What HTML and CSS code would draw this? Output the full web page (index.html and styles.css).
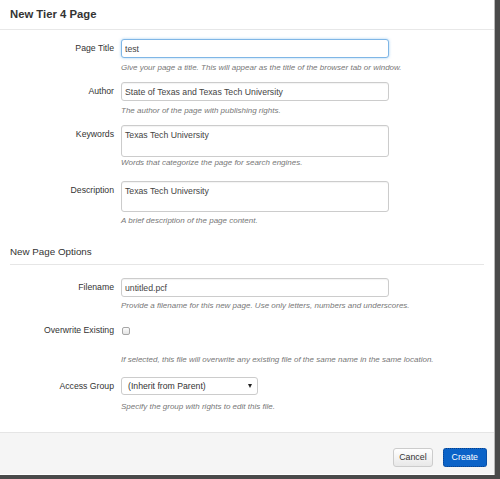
FILE: index.html
```html
<!DOCTYPE html>
<html>
<head>
<meta charset="utf-8">
<link rel="stylesheet" href="styles.css">
</head>
<body>
<div class="modal">
  <div class="header"><h1 class="title">New Tier 4 Page</h1></div>
  <div class="body">
    <div class="group g1">
      <label class="label">Page Title</label>
      <input class="field focus" type="text" value="test">
      <div class="help h5">Give your page a title. This will appear as the title of the browser tab or window.</div>
    </div>
    <div class="group g1">
      <label class="label">Author</label>
      <input class="field" type="text" value="State of Texas and Texas Tech University">
      <div class="help h5">The author of the page with publishing rights.</div>
    </div>
    <div class="group g3">
      <label class="label">Keywords</label>
      <textarea class="field area a32">Texas Tech University</textarea>
      <div class="help h1">Words that categorize the page for search engines.</div>
    </div>
    <div class="group">
      <label class="label">Description</label>
      <textarea class="field area a31">Texas Tech University</textarea>
      <div class="help h4">A brief description of the page content.</div>
    </div>
    <h2 class="section">New Page Options</h2>
    <div class="group g2">
      <label class="label">Filename</label>
      <input class="field" type="text" value="untitled.pcf">
      <div class="help h4">Provide a filename for this new page. Use only letters, numbers and underscores.</div>
    </div>
    <div class="group g4">
      <label class="label">Overwrite Existing</label>
      <div class="checkwrap"><span class="check"></span></div>
      <div class="help h15">If selected, this file will overwrite any existing file of the same name in the same location.</div>
    </div>
    <div class="group">
      <label class="label">Access Group</label>
      <div class="select"><span>(Inherit from Parent)</span><span class="arrow"></span></div>
      <div class="help h6">Specify the group with rights to edit this file.</div>
    </div>
  </div>
  <div class="footer">
    <button class="btn cancel">Cancel</button>
    <button class="btn create">Create</button>
  </div>
</div>
</body>
</html>
```

FILE: styles.css
```css
* { box-sizing: border-box; }
html, body { margin: 0; padding: 0; }
body {
  background: #4a4a4a;
  width: 500px;
  height: 479px;
  overflow: hidden;
  font-family: "Liberation Sans", Arial, sans-serif;
  color: #333;
}
.modal {
  width: 495px;
  height: 475px;
  background: #fff;
  border-right: 1px solid #b8b8b8;
  display: flex;
  flex-direction: column;
}
.header {
  height: 30px;
  border-bottom: 1px solid #e8e8e8;
  padding-left: 10px;
}
.title {
  margin: 0;
  font-size: 11.3px;
  font-weight: bold;
  line-height: 29px;
  color: #333;
}
.body {
  flex: 1;
  padding-top: 9px;
}
.group {
  display: grid;
  grid-template-columns: 114px 268px;
  column-gap: 7px;
}
.g1 { margin-bottom: 9px; }
.g2 { margin-bottom: 10px; }
.g3 { margin-bottom: 13px; }
.g4 { margin-bottom: 12px; }
.label {
  font-size: 8.7px;
  line-height: 19px;
  text-align: right;
  color: #333;
}
.field {
  width: 268px;
  height: 19px;
  margin: 0;
  padding: 0 3px;
  border: 1px solid #ccc;
  border-radius: 3px;
  font-family: "Liberation Sans", Arial, sans-serif;
  font-size: 8.7px;
  color: #444;
  background: #fff;
  box-shadow: inset 0 1px 1px rgba(0,0,0,0.05);
  outline: none;
}
.focus {
  border-color: #7fb6e6;
  box-shadow: 0 0 3px rgba(102,175,233,0.6);
}
.area {
  resize: none;
  overflow: hidden;
  padding: 4px 3px;
  line-height: 11px;
}
.a32 { height: 32px; }
.a31 { height: 31px; }
.help {
  grid-column: 2;
  font-size: 8px;
  line-height: 10px;
  font-style: italic;
  color: #777;
  white-space: nowrap;
}
.h1 { margin-top: 1px; }
.h4 { margin-top: 4px; }
.h5 { margin-top: 5px; }
.h6 { margin-top: 6px; }
.h15 { margin-top: 15px; }
.section {
  margin: 20px 10px 13px 10px;
  padding-bottom: 6px;
  border-bottom: 1px solid #e6e6e6;
  font-size: 9.8px;
  font-weight: normal;
  line-height: 12px;
  color: #333;
}
.checkwrap {
  height: 19px;
  display: flex;
  align-items: center;
  padding-left: 1px;
}
.check {
  width: 8px;
  height: 8px;
  border: 1px solid #a6a6a6;
  border-radius: 2px;
  background: linear-gradient(#fcfcfc, #e4e4e4);
}
.select {
  width: 137px;
  height: 18px;
  border: 1px solid #ccc;
  border-radius: 3px;
  padding: 0 5px 0 6px;
  display: flex;
  align-items: center;
  justify-content: space-between;
  font-size: 8.7px;
  color: #333;
  background: #fff;
}
.arrow {
  width: 0;
  height: 0;
  border-left: 2.5px solid transparent;
  border-right: 2.5px solid transparent;
  border-top: 4px solid #222;
}
.footer {
  height: 43px;
  border-top: 1px solid #e5e5e5;
  border-bottom: 1px solid #fff;
  background: #f5f5f5;
  display: flex;
  justify-content: flex-end;
  align-items: flex-start;
  gap: 10px;
  padding: 15px 7px 0 0;
}
.btn {
  height: 19px;
  margin: 0;
  border-radius: 3px;
  font-family: "Liberation Sans", Arial, sans-serif;
  font-size: 8.8px;
  line-height: 17px;
}
.cancel {
  padding: 0 5px;
  border: 1px solid #ccc;
  background: linear-gradient(#ffffff, #e8e8e8);
  color: #333;
}
.create {
  padding: 0 8px;
  border: 1px dotted #0b3f86;
  background: #0b63c8;
  color: #fff;
}
```
